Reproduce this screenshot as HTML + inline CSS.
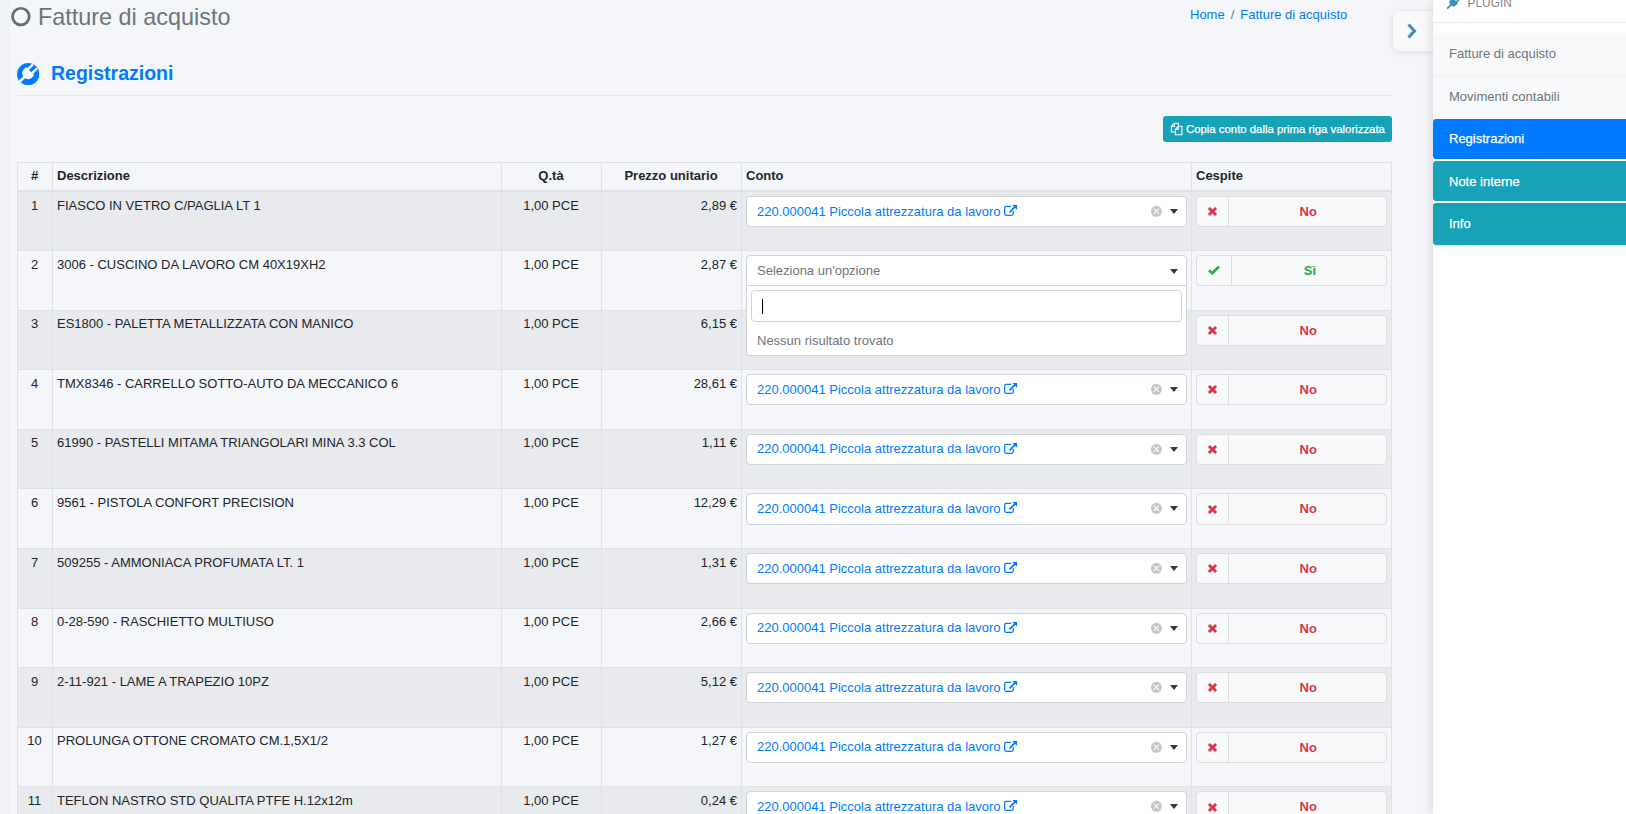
<!DOCTYPE html>
<html><head><meta charset="utf-8">
<style>
*{box-sizing:border-box;margin:0;padding:0}
html,body{width:1626px;height:814px;overflow:hidden;background:#f4f6f9;font-family:"Liberation Sans",sans-serif;font-size:13px;color:#212529}
.abs{position:absolute}
#lstrip{position:absolute;left:0;top:0;width:10px;height:814px;background:#f1f3f6}
#title{position:absolute;left:38px;top:4px;font-size:23.4px;line-height:27px;color:#6c757d;white-space:nowrap}
#ring{position:absolute;left:9px;top:5px}
#bc{position:absolute;left:1190px;top:6.7px;line-height:15px;color:#007bff;white-space:nowrap}
#bc .sep{color:#6c757d;padding:0 6px}
#h3{position:absolute;left:51px;top:61.5px;font-size:19.5px;line-height:23px;font-weight:bold;color:#007bff;white-space:nowrap}
#hicon{position:absolute;left:16.8px;top:62.6px}
#hr{position:absolute;left:17px;top:95px;width:1375px;height:1px;background:#e6e7e9}
#btn{position:absolute;left:1163px;top:116px;width:229px;height:26px;background:#17a2b8;border-radius:3px;color:#fff;font-size:11.375px;line-height:26px;white-space:nowrap}
#btn span{position:absolute;left:23px;top:0;-webkit-text-stroke:0.25px #fff}
#btn svg{position:absolute;left:7px;top:6px}
#tbl{position:absolute;left:17px;top:162px;width:1375px;height:700px;border:1px solid #dee2e6;border-bottom:none}
.vl{position:absolute;top:162px;width:1px;height:652px;background:#dee2e6}
.hl{position:absolute;left:17px;width:1375px;height:1px;background:#dee2e6}
.strip{position:absolute;left:18px;width:1373px;background:#e8eaed}
.th{position:absolute;top:168px;line-height:15px;font-weight:bold;white-space:nowrap}
.tx{position:absolute;line-height:15px;white-space:nowrap}
.c1{left:17px;width:35px;text-align:center}
.c2{left:57px}
.c3{left:501px;width:100px;text-align:center}
.c4{left:601px;width:136px;text-align:right}
.sel{position:absolute;left:746px;width:441px;height:31.25px;background:#fff;border:1px solid #ced4da;border-radius:4px}
.sel.open{border-radius:4px 4px 0 0}
.sel.open .arr{top:13px}
.sel .val{position:absolute;left:10px;top:6.7px;line-height:15px;color:#007bff;white-space:nowrap}
.sel .ph{position:absolute;left:10px;top:6.8px;line-height:15px;color:#6c757d;white-space:nowrap}
.sel .ext{position:absolute;left:257px;top:7px}
.sel .clr{position:absolute;left:403px;top:8px}
.arr{position:absolute;left:423px;top:12px;width:0;height:0;border-left:4px solid transparent;border-right:4px solid transparent;border-top:5px solid #343a40}
.dd{position:absolute;left:746px;width:441px;height:70px;background:#fff;border:1px solid #ced4da;border-top:none;border-radius:0 0 4px 4px}
.srch{position:absolute;left:4px;top:4px;width:431px;height:32px;border:1px solid #ced4da;border-radius:4px}
.caret{position:absolute;left:10px;top:8px;width:1.2px;height:15px;background:#000}
.nores{position:absolute;left:10px;top:46.6px;line-height:15px;color:#6c757d;white-space:nowrap}
.bg{position:absolute;left:1196px;width:191px;height:31.25px;background:#f8f9fa;border:1px solid #dddddd;border-radius:4px}
.bg .ic{position:absolute;left:0;top:0;width:32px;height:29px;border-right:1px solid #dddddd}
.bg .ic.si{width:35px}
.bg .ic svg{position:absolute;left:10.2px;top:9.3px}
.bg .ic.si svg{left:11px;top:9px}
.bg .lb{position:absolute;left:33.5px;right:0;top:7px;line-height:15px;text-align:center;font-weight:bold;color:#dc3545}
#sb{position:absolute;left:1433px;top:0;width:193px;height:814px;background:#fff;box-shadow:-1px 0 11px rgba(0,0,0,.13)}
#sbtop{position:absolute;left:0;top:0;width:193px;height:23px;border-bottom:1px solid #ebebeb}
#plug{position:absolute;left:1467.5px;top:-4.3px;font-size:11.9px;line-height:14px;color:#858585;white-space:nowrap}
.mi{position:absolute;left:1433px;width:193px;background:#f8f9fa;color:#6c757d;line-height:15px;white-space:nowrap}
.mi span{position:absolute;left:16px}
#tog{position:absolute;left:1393px;top:11px;width:40px;height:40px;background:#f8f9fa;border-radius:7px 0 0 7px;box-shadow:0 1px 6px rgba(0,0,0,.12)}
</style></head><body>
<div id="lstrip"></div>
<svg id="ring" width="24" height="24" viewBox="0 0 24 24"><circle cx="11.85" cy="11.6" r="8.35" fill="none" stroke="#636d76" stroke-width="2.7"/></svg>
<div id="title">Fatture di acquisto</div>
<div id="bc">Home<span class="sep">/</span>Fatture di acquisto</div>
<svg id="hicon" width="22.4" height="22.4" viewBox="-11.2 -11.2 22.4 22.4"><defs><clipPath id="cc"><circle cx="0" cy="0" r="11.1"/></clipPath></defs><circle cx="0" cy="0" r="11.15" fill="#007bff"/><g clip-path="url(#cc)"><g transform="translate(-0.5,-0.6) rotate(45)" fill="#fff"><path d="M-5.8 -3.4H5.8V0A5.8 5.3 0 0 1 -5.8 0Z"/><rect x="-4.1" y="-10.3" width="2.45" height="7.3"/><rect x="1.65" y="-10.3" width="2.45" height="7.3"/><rect x="-1.35" y="4" width="2.7" height="9"/></g></g></svg>
<div id="h3">Registrazioni</div>
<div id="hr"></div>
<div id="btn"><svg width="14" height="14" viewBox="0 0 14 14"><path d="M4.2 1.2H8.4V4.1M5.3 9.9H1.4V4.3L4.3 1.3M1.5 4.4H4.3V1.5" fill="none" stroke="#fff" stroke-width="1.05"/><path d="M9.2 4.2H11.9V12.7H5.4V7.2L8.3 4.3V7.2H5.5" fill="none" stroke="#fff" stroke-width="1.05"/></svg><span>Copia conto dalla prima riga valorizzata</span></div>
<div class="strip" style="top:191.00px;height:59.00px"></div>
<div class="strip" style="top:309.60px;height:59.60px"></div>
<div class="strip" style="top:428.80px;height:59.60px"></div>
<div class="strip" style="top:548.00px;height:59.60px"></div>
<div class="strip" style="top:667.20px;height:59.60px"></div>
<div class="strip" style="top:786.40px;height:59.60px"></div>
<div id="tbl"></div>
<div class="vl" style="left:52px"></div>
<div class="vl" style="left:501px"></div>
<div class="vl" style="left:601px"></div>
<div class="vl" style="left:741px"></div>
<div class="vl" style="left:1191px"></div>
<div class="hl" style="top:190px;height:2px"></div>
<div class="th c1">#</div>
<div class="th c2">Descrizione</div>
<div class="th c3">Q.tà</div>
<div class="th" style="left:601px;width:140px;text-align:center">Prezzo unitario</div>
<div class="th" style="left:746px">Conto</div>
<div class="th" style="left:1196px">Cespite</div>
<div class="tx c1" style="top:198.00px">1</div>
<div class="tx c2" style="top:198.00px">FIASCO IN VETRO C/PAGLIA LT 1</div>
<div class="tx c3" style="top:198.00px">1,00 PCE</div>
<div class="tx c4" style="top:198.00px">2,89 €</div>
<div class="sel" style="top:196.00px"><span class="val">220.000041 Piccola attrezzatura da lavoro</span><svg class="ext" width="14" height="13" viewBox="0 0 14 13"><path d="M7.2 2.4H2.1Q0.65 2.4 0.65 3.9V9.8Q0.65 11.3 2.1 11.3H7.8Q9.3 11.3 9.3 9.8V7.1" fill="none" stroke="#007bff" stroke-width="1.25"/><path d="M5.5 8.3L11.4 2.4" stroke="#007bff" stroke-width="1.7"/><path d="M8.3 0.9H13.1V5.7Z" fill="#007bff"/></svg><svg class="clr" width="13" height="13" viewBox="0 0 13 13"><circle cx="6.4" cy="6.3" r="5.45" fill="#c6c6c6"/><path d="M3.8 3.7L9 8.9M9 3.7L3.8 8.9" stroke="#fff" stroke-width="1.05"/></svg><div class="arr"></div></div>
<div class="bg" style="top:196.00px"><div class="ic"><svg width="11" height="11" viewBox="0 0 11 11"><path d="M1.9 1.9L9.1 9.1M9.1 1.9L1.9 9.1" stroke="#dc3545" stroke-width="2.8"/></svg></div><div class="lb">No</div></div>
<div class="hl" style="top:250.00px"></div>
<div class="tx c1" style="top:256.50px">2</div>
<div class="tx c2" style="top:256.50px">3006 - CUSCINO DA LAVORO CM 40X19XH2</div>
<div class="tx c3" style="top:256.50px">1,00 PCE</div>
<div class="tx c4" style="top:256.50px">2,87 €</div>
<div class="sel open" style="top:255.00px"><span class="ph">Seleziona un'opzione</span><div class="arr"></div></div>
<div class="bg" style="top:255.00px"><div class="ic si"><svg width="12" height="10" viewBox="0 0 12 10"><path d="M1 5.2L4.2 8.2L11 1.6" fill="none" stroke="#28a745" stroke-width="2.6"/></svg></div><div class="lb" style="color:#28a745;left:36.8px">Sì</div></div>
<div class="hl" style="top:309.60px"></div>
<div class="tx c1" style="top:316.10px">3</div>
<div class="tx c2" style="top:316.10px">ES1800 - PALETTA METALLIZZATA CON MANICO</div>
<div class="tx c3" style="top:316.10px">1,00 PCE</div>
<div class="tx c4" style="top:316.10px">6,15 €</div>
<div class="bg" style="top:314.60px"><div class="ic"><svg width="11" height="11" viewBox="0 0 11 11"><path d="M1.9 1.9L9.1 9.1M9.1 1.9L1.9 9.1" stroke="#dc3545" stroke-width="2.8"/></svg></div><div class="lb">No</div></div>
<div class="hl" style="top:369.20px"></div>
<div class="tx c1" style="top:375.70px">4</div>
<div class="tx c2" style="top:375.70px">TMX8346 - CARRELLO SOTTO-AUTO DA MECCANICO 6</div>
<div class="tx c3" style="top:375.70px">1,00 PCE</div>
<div class="tx c4" style="top:375.70px">28,61 €</div>
<div class="sel" style="top:374.20px"><span class="val">220.000041 Piccola attrezzatura da lavoro</span><svg class="ext" width="14" height="13" viewBox="0 0 14 13"><path d="M7.2 2.4H2.1Q0.65 2.4 0.65 3.9V9.8Q0.65 11.3 2.1 11.3H7.8Q9.3 11.3 9.3 9.8V7.1" fill="none" stroke="#007bff" stroke-width="1.25"/><path d="M5.5 8.3L11.4 2.4" stroke="#007bff" stroke-width="1.7"/><path d="M8.3 0.9H13.1V5.7Z" fill="#007bff"/></svg><svg class="clr" width="13" height="13" viewBox="0 0 13 13"><circle cx="6.4" cy="6.3" r="5.45" fill="#c6c6c6"/><path d="M3.8 3.7L9 8.9M9 3.7L3.8 8.9" stroke="#fff" stroke-width="1.05"/></svg><div class="arr"></div></div>
<div class="bg" style="top:374.20px"><div class="ic"><svg width="11" height="11" viewBox="0 0 11 11"><path d="M1.9 1.9L9.1 9.1M9.1 1.9L1.9 9.1" stroke="#dc3545" stroke-width="2.8"/></svg></div><div class="lb">No</div></div>
<div class="hl" style="top:428.80px"></div>
<div class="tx c1" style="top:435.30px">5</div>
<div class="tx c2" style="top:435.30px">61990 - PASTELLI MITAMA TRIANGOLARI MINA 3.3 COL</div>
<div class="tx c3" style="top:435.30px">1,00 PCE</div>
<div class="tx c4" style="top:435.30px">1,11 €</div>
<div class="sel" style="top:433.80px"><span class="val">220.000041 Piccola attrezzatura da lavoro</span><svg class="ext" width="14" height="13" viewBox="0 0 14 13"><path d="M7.2 2.4H2.1Q0.65 2.4 0.65 3.9V9.8Q0.65 11.3 2.1 11.3H7.8Q9.3 11.3 9.3 9.8V7.1" fill="none" stroke="#007bff" stroke-width="1.25"/><path d="M5.5 8.3L11.4 2.4" stroke="#007bff" stroke-width="1.7"/><path d="M8.3 0.9H13.1V5.7Z" fill="#007bff"/></svg><svg class="clr" width="13" height="13" viewBox="0 0 13 13"><circle cx="6.4" cy="6.3" r="5.45" fill="#c6c6c6"/><path d="M3.8 3.7L9 8.9M9 3.7L3.8 8.9" stroke="#fff" stroke-width="1.05"/></svg><div class="arr"></div></div>
<div class="bg" style="top:433.80px"><div class="ic"><svg width="11" height="11" viewBox="0 0 11 11"><path d="M1.9 1.9L9.1 9.1M9.1 1.9L1.9 9.1" stroke="#dc3545" stroke-width="2.8"/></svg></div><div class="lb">No</div></div>
<div class="hl" style="top:488.40px"></div>
<div class="tx c1" style="top:494.90px">6</div>
<div class="tx c2" style="top:494.90px">9561 - PISTOLA CONFORT PRECISION</div>
<div class="tx c3" style="top:494.90px">1,00 PCE</div>
<div class="tx c4" style="top:494.90px">12,29 €</div>
<div class="sel" style="top:493.40px"><span class="val">220.000041 Piccola attrezzatura da lavoro</span><svg class="ext" width="14" height="13" viewBox="0 0 14 13"><path d="M7.2 2.4H2.1Q0.65 2.4 0.65 3.9V9.8Q0.65 11.3 2.1 11.3H7.8Q9.3 11.3 9.3 9.8V7.1" fill="none" stroke="#007bff" stroke-width="1.25"/><path d="M5.5 8.3L11.4 2.4" stroke="#007bff" stroke-width="1.7"/><path d="M8.3 0.9H13.1V5.7Z" fill="#007bff"/></svg><svg class="clr" width="13" height="13" viewBox="0 0 13 13"><circle cx="6.4" cy="6.3" r="5.45" fill="#c6c6c6"/><path d="M3.8 3.7L9 8.9M9 3.7L3.8 8.9" stroke="#fff" stroke-width="1.05"/></svg><div class="arr"></div></div>
<div class="bg" style="top:493.40px"><div class="ic"><svg width="11" height="11" viewBox="0 0 11 11"><path d="M1.9 1.9L9.1 9.1M9.1 1.9L1.9 9.1" stroke="#dc3545" stroke-width="2.8"/></svg></div><div class="lb">No</div></div>
<div class="hl" style="top:548.00px"></div>
<div class="tx c1" style="top:554.50px">7</div>
<div class="tx c2" style="top:554.50px">509255 - AMMONIACA PROFUMATA LT. 1</div>
<div class="tx c3" style="top:554.50px">1,00 PCE</div>
<div class="tx c4" style="top:554.50px">1,31 €</div>
<div class="sel" style="top:553.00px"><span class="val">220.000041 Piccola attrezzatura da lavoro</span><svg class="ext" width="14" height="13" viewBox="0 0 14 13"><path d="M7.2 2.4H2.1Q0.65 2.4 0.65 3.9V9.8Q0.65 11.3 2.1 11.3H7.8Q9.3 11.3 9.3 9.8V7.1" fill="none" stroke="#007bff" stroke-width="1.25"/><path d="M5.5 8.3L11.4 2.4" stroke="#007bff" stroke-width="1.7"/><path d="M8.3 0.9H13.1V5.7Z" fill="#007bff"/></svg><svg class="clr" width="13" height="13" viewBox="0 0 13 13"><circle cx="6.4" cy="6.3" r="5.45" fill="#c6c6c6"/><path d="M3.8 3.7L9 8.9M9 3.7L3.8 8.9" stroke="#fff" stroke-width="1.05"/></svg><div class="arr"></div></div>
<div class="bg" style="top:553.00px"><div class="ic"><svg width="11" height="11" viewBox="0 0 11 11"><path d="M1.9 1.9L9.1 9.1M9.1 1.9L1.9 9.1" stroke="#dc3545" stroke-width="2.8"/></svg></div><div class="lb">No</div></div>
<div class="hl" style="top:607.60px"></div>
<div class="tx c1" style="top:614.10px">8</div>
<div class="tx c2" style="top:614.10px">0-28-590 - RASCHIETTO MULTIUSO</div>
<div class="tx c3" style="top:614.10px">1,00 PCE</div>
<div class="tx c4" style="top:614.10px">2,66 €</div>
<div class="sel" style="top:612.60px"><span class="val">220.000041 Piccola attrezzatura da lavoro</span><svg class="ext" width="14" height="13" viewBox="0 0 14 13"><path d="M7.2 2.4H2.1Q0.65 2.4 0.65 3.9V9.8Q0.65 11.3 2.1 11.3H7.8Q9.3 11.3 9.3 9.8V7.1" fill="none" stroke="#007bff" stroke-width="1.25"/><path d="M5.5 8.3L11.4 2.4" stroke="#007bff" stroke-width="1.7"/><path d="M8.3 0.9H13.1V5.7Z" fill="#007bff"/></svg><svg class="clr" width="13" height="13" viewBox="0 0 13 13"><circle cx="6.4" cy="6.3" r="5.45" fill="#c6c6c6"/><path d="M3.8 3.7L9 8.9M9 3.7L3.8 8.9" stroke="#fff" stroke-width="1.05"/></svg><div class="arr"></div></div>
<div class="bg" style="top:612.60px"><div class="ic"><svg width="11" height="11" viewBox="0 0 11 11"><path d="M1.9 1.9L9.1 9.1M9.1 1.9L1.9 9.1" stroke="#dc3545" stroke-width="2.8"/></svg></div><div class="lb">No</div></div>
<div class="hl" style="top:667.20px"></div>
<div class="tx c1" style="top:673.70px">9</div>
<div class="tx c2" style="top:673.70px">2-11-921 - LAME A TRAPEZIO 10PZ</div>
<div class="tx c3" style="top:673.70px">1,00 PCE</div>
<div class="tx c4" style="top:673.70px">5,12 €</div>
<div class="sel" style="top:672.20px"><span class="val">220.000041 Piccola attrezzatura da lavoro</span><svg class="ext" width="14" height="13" viewBox="0 0 14 13"><path d="M7.2 2.4H2.1Q0.65 2.4 0.65 3.9V9.8Q0.65 11.3 2.1 11.3H7.8Q9.3 11.3 9.3 9.8V7.1" fill="none" stroke="#007bff" stroke-width="1.25"/><path d="M5.5 8.3L11.4 2.4" stroke="#007bff" stroke-width="1.7"/><path d="M8.3 0.9H13.1V5.7Z" fill="#007bff"/></svg><svg class="clr" width="13" height="13" viewBox="0 0 13 13"><circle cx="6.4" cy="6.3" r="5.45" fill="#c6c6c6"/><path d="M3.8 3.7L9 8.9M9 3.7L3.8 8.9" stroke="#fff" stroke-width="1.05"/></svg><div class="arr"></div></div>
<div class="bg" style="top:672.20px"><div class="ic"><svg width="11" height="11" viewBox="0 0 11 11"><path d="M1.9 1.9L9.1 9.1M9.1 1.9L1.9 9.1" stroke="#dc3545" stroke-width="2.8"/></svg></div><div class="lb">No</div></div>
<div class="hl" style="top:726.80px"></div>
<div class="tx c1" style="top:733.30px">10</div>
<div class="tx c2" style="top:733.30px">PROLUNGA OTTONE CROMATO CM.1,5X1/2</div>
<div class="tx c3" style="top:733.30px">1,00 PCE</div>
<div class="tx c4" style="top:733.30px">1,27 €</div>
<div class="sel" style="top:731.80px"><span class="val">220.000041 Piccola attrezzatura da lavoro</span><svg class="ext" width="14" height="13" viewBox="0 0 14 13"><path d="M7.2 2.4H2.1Q0.65 2.4 0.65 3.9V9.8Q0.65 11.3 2.1 11.3H7.8Q9.3 11.3 9.3 9.8V7.1" fill="none" stroke="#007bff" stroke-width="1.25"/><path d="M5.5 8.3L11.4 2.4" stroke="#007bff" stroke-width="1.7"/><path d="M8.3 0.9H13.1V5.7Z" fill="#007bff"/></svg><svg class="clr" width="13" height="13" viewBox="0 0 13 13"><circle cx="6.4" cy="6.3" r="5.45" fill="#c6c6c6"/><path d="M3.8 3.7L9 8.9M9 3.7L3.8 8.9" stroke="#fff" stroke-width="1.05"/></svg><div class="arr"></div></div>
<div class="bg" style="top:731.80px"><div class="ic"><svg width="11" height="11" viewBox="0 0 11 11"><path d="M1.9 1.9L9.1 9.1M9.1 1.9L1.9 9.1" stroke="#dc3545" stroke-width="2.8"/></svg></div><div class="lb">No</div></div>
<div class="hl" style="top:786.40px"></div>
<div class="tx c1" style="top:792.90px">11</div>
<div class="tx c2" style="top:792.90px">TEFLON NASTRO STD QUALITA PTFE H.12x12m</div>
<div class="tx c3" style="top:792.90px">1,00 PCE</div>
<div class="tx c4" style="top:792.90px">0,24 €</div>
<div class="sel" style="top:791.40px"><span class="val">220.000041 Piccola attrezzatura da lavoro</span><svg class="ext" width="14" height="13" viewBox="0 0 14 13"><path d="M7.2 2.4H2.1Q0.65 2.4 0.65 3.9V9.8Q0.65 11.3 2.1 11.3H7.8Q9.3 11.3 9.3 9.8V7.1" fill="none" stroke="#007bff" stroke-width="1.25"/><path d="M5.5 8.3L11.4 2.4" stroke="#007bff" stroke-width="1.7"/><path d="M8.3 0.9H13.1V5.7Z" fill="#007bff"/></svg><svg class="clr" width="13" height="13" viewBox="0 0 13 13"><circle cx="6.4" cy="6.3" r="5.45" fill="#c6c6c6"/><path d="M3.8 3.7L9 8.9M9 3.7L3.8 8.9" stroke="#fff" stroke-width="1.05"/></svg><div class="arr"></div></div>
<div class="bg" style="top:791.40px"><div class="ic"><svg width="11" height="11" viewBox="0 0 11 11"><path d="M1.9 1.9L9.1 9.1M9.1 1.9L1.9 9.1" stroke="#dc3545" stroke-width="2.8"/></svg></div><div class="lb">No</div></div><div class="dd" style="top:286.00px"><div class="srch"><div class="caret"></div></div><div class="nores">Nessun risultato trovato</div></div>
<div id="tog"><svg width="12" height="16" viewBox="0 0 12 16" style="position:absolute;left:13px;top:12px"><path d="M2.5 1.5L8.5 8L2.5 14.5" fill="none" stroke="#3c8dbc" stroke-width="3"/></svg></div>
<div id="sb"><div id="sbtop"></div></div>
<svg width="15" height="13" viewBox="0 0 15 13" style="position:absolute;left:1445.7px;top:-3.2px"><g transform="translate(7.6,5.2) rotate(45)" fill="#3c8dbc"><path d="M-3.9 -2.5H3.9V0.2A3.9 3.8 0 0 1 -3.9 0.2Z"/><rect x="-2.7" y="-7.5" width="1.7" height="5.5"/><rect x="1" y="-7.5" width="1.7" height="5.5"/><rect x="-0.9" y="3" width="1.8" height="6.2"/></g></svg>
<div id="plug">PLUGIN</div>
<div class="mi" style="top:33px;height:42px"><span style="top:13px">Fatture di acquisto</span></div>
<div class="mi" style="top:75px;height:43px;border-top:1px solid #eef0f2"><span style="top:13px">Movimenti contabili</span></div>
<div class="mi" style="top:119px;height:40px;background:#007bff;color:#fff;-webkit-text-stroke:0.25px #fff;border-radius:3px 0 0 3px"><span style="top:11.5px">Registrazioni</span></div>
<div class="mi" style="top:161px;height:40px;background:#17a2b8;color:#fff;-webkit-text-stroke:0.25px #fff;border-radius:3px 0 0 3px"><span style="top:12.8px">Note interne</span></div>
<div class="mi" style="top:203px;height:42px;background:#17a2b8;color:#fff;-webkit-text-stroke:0.25px #fff;border-radius:3px 0 0 3px"><span style="top:13px">Info</span></div>
<div class="abs" style="left:1433px;top:245px;width:193px;height:1px;background:#e9ecef"></div>
</body></html>
